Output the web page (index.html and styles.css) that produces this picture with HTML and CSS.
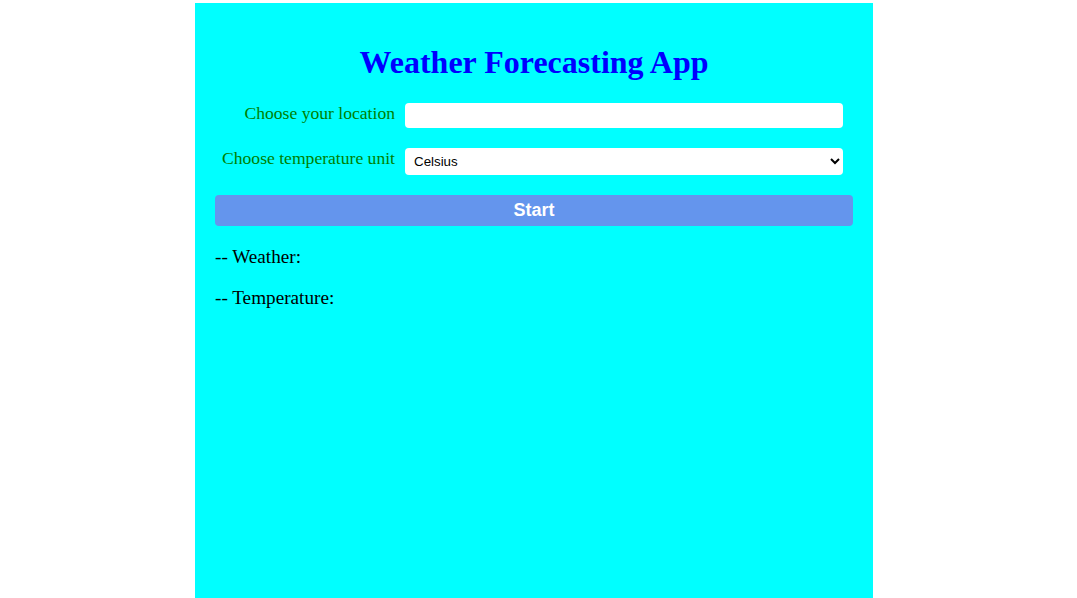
FILE: index.html
```html
<!DOCTYPE html>
<html>
<head>
<meta charset="utf-8">
<title>Weather Forecasting App</title>
<link rel="stylesheet" href="styles.css">
</head>
<body>
<div class="app">
  <h1 class="title">Weather Forecasting App</h1>
  <div class="form">
    <label class="label" for="loc">Choose your location</label>
    <input class="field" id="loc" type="text">
    <label class="label" for="unit">Choose temperature unit</label>
    <select class="field select" id="unit">
      <option>Celsius</option>
      <option>Fahrenheit</option>
    </select>
  </div>
  <button class="start">Start</button>
  <p class="result">-- Weather:</p>
  <p class="result">-- Temperature:</p>
</div>
</body>
</html>
```
FILE: styles.css
```css
html, body {
  margin: 0;
  padding: 0;
  background: #ffffff;
}
.app {
  box-sizing: border-box;
  width: 678px;
  min-height: 595px;
  margin: 3px 0 0 195px;
  padding: 0 20px 20px;
  background: #00ffff;
  font-family: "Liberation Serif", "Times New Roman", serif;
  overflow: hidden;
}
.title {
  margin: 0;
  padding-top: 41px;
  height: 37px;
  margin-bottom: 22px;
  text-align: center;
  font-size: 32px;
  font-weight: bold;
  color: #0000ff;
  line-height: 37px;
}
.form {
  display: grid;
  grid-template-columns: 180px 438px;
  column-gap: 10px;
  row-gap: 20px;
  align-items: start;
}
.label {
  text-align: right;
  font-size: 17.6px;
  line-height: 21px;
  color: #008000;
}
.field {
  box-sizing: border-box;
  width: 438px;
  height: 25px;
  border: none;
  border-radius: 4px;
  background: #ffffff;
  margin: 0;
  padding: 2px 8px;
  font-family: "Liberation Sans", Arial, sans-serif;
  font-size: 13.33px;
  outline: none;
}
.select {
  height: 27px;
  padding: 2px 5px;
  color: #000;
}
.start {
  display: block;
  width: 100%;
  height: 31px;
  margin: 20px 0 0;
  border: none;
  border-radius: 4px;
  background: #6495ed;
  color: #ffffff;
  font-family: "Liberation Sans", Arial, sans-serif;
  font-weight: bold;
  font-size: 18px;
  padding: 0;
}
.result {
  margin: 20px 0 0;
  font-size: 19.2px;
  line-height: 22px;
  color: #000;
}
.result + .result {
  margin-top: 19px;
}
```
